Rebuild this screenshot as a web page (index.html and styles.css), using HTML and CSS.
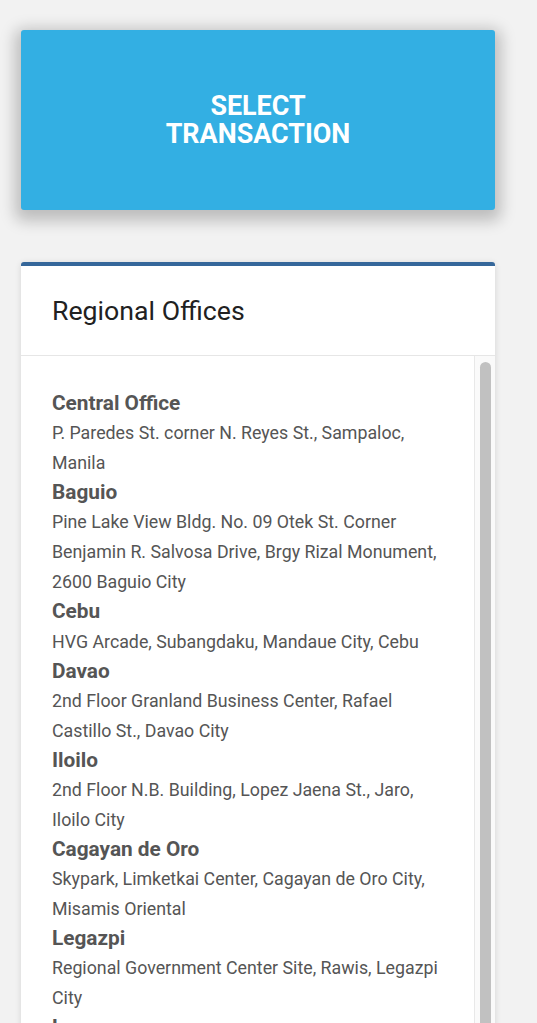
FILE: index.html
```html
<!DOCTYPE html>
<html lang="en">
<head>
<meta charset="utf-8">
<title>Regional Offices</title>
<link rel="stylesheet" href="styles.css">
</head>
<body>
<main class="page">
  <button class="select-btn" type="button"><span class="select-label">SELECT TRANSACTION</span></button>

  <section class="card">
    <header class="card-header">
      <h2 class="card-title">Regional Offices</h2>
    </header>
    <div class="card-body">
      <div class="office-list">
        <div class="office">
          <h3 class="office-name">Central Office</h3>
          <p class="office-addr">P. Paredes St. corner N. Reyes St., Sampaloc, Manila</p>
        </div>
        <div class="office">
          <h3 class="office-name">Baguio</h3>
          <p class="office-addr">Pine Lake View Bldg. No. 09 Otek St. Corner Benjamin R. Salvosa Drive, Brgy Rizal Monument, 2600 Baguio City</p>
        </div>
        <div class="office">
          <h3 class="office-name">Cebu</h3>
          <p class="office-addr">HVG Arcade, Subangdaku, Mandaue City, Cebu</p>
        </div>
        <div class="office">
          <h3 class="office-name">Davao</h3>
          <p class="office-addr">2nd Floor Granland Business Center, Rafael Castillo St., Davao City</p>
        </div>
        <div class="office">
          <h3 class="office-name">Iloilo</h3>
          <p class="office-addr">2nd Floor N.B. Building, Lopez Jaena St., Jaro, Iloilo City</p>
        </div>
        <div class="office">
          <h3 class="office-name">Cagayan de Oro</h3>
          <p class="office-addr">Skypark, Limketkai Center, Cagayan de Oro City, Misamis Oriental</p>
        </div>
        <div class="office">
          <h3 class="office-name">Legazpi</h3>
          <p class="office-addr">Regional Government Center Site, Rawis, Legazpi City</p>
        </div>
        <div class="office">
          <h3 class="office-name">Lucena</h3>
          <p class="office-addr">Quezon Avenue, Lucena City</p>
        </div>
      </div>
      <div class="scroll-track" aria-hidden="true"><div class="scroll-thumb"></div></div>
    </div>
  </section>
</main>
</body>
</html>
```

FILE: styles.css
```css
html, body {
  margin: 0;
  padding: 0;
  background: #f2f2f2;
  font-family: Roboto, "Liberation Sans", Arial, sans-serif;
}

.page {
  padding: 30px 42px 0 21px;
  display: flex;
  flex-direction: column;
  gap: 52px;
}

.select-btn {
  display: flex;
  align-items: center;
  justify-content: center;
  height: 180px;
  width: 100%;
  border: none;
  border-radius: 3px;
  background: #33afe3;
  box-shadow: 0 5px 15px 6px rgba(0, 0, 0, 0.22);
  color: #ffffff;
  font-family: Roboto, "Liberation Sans", Arial, sans-serif;
  font-weight: 700;
  font-size: 26.9px;
  line-height: 28px;
  padding: 0;
  cursor: pointer;
}

.select-label {
  max-width: 230px;
  text-align: center;
}

.card {
  background: #ffffff;
  border-top: 4px solid #35679a;
  border-radius: 3px 3px 0 0;
  box-shadow: 0 1px 6px rgba(0, 0, 0, 0.12);
}

.card-header {
  height: 89px;
  display: flex;
  align-items: center;
  padding: 0 31px;
  border-bottom: 1px solid #e6e6e6;
}

.card-title {
  margin: 0;
  font-size: 26.7px;
  font-weight: 400;
  color: #212121;
}

.card-body {
  display: flex;
}

.office-list {
  flex: 1;
  padding: 33px 31px 20px 31px;
}

.scroll-track {
  width: 21px;
  flex: none;
  background: #fafafa;
  border-left: 1px solid #e8e8e8;
  padding: 6px 4px 4px 5px;
  box-sizing: border-box;
  display: flex;
}

.scroll-thumb {
  flex: 1;
  background: #c1c1c1;
  border-radius: 6px;
}

.office {
  width: 388px;
}

.office-name {
  margin: 0;
  font-size: 20.8px;
  line-height: 29.2px;
  font-weight: 700;
  color: #555555;
}

.office-addr {
  margin: 0;
  font-size: 17.8px;
  line-height: 30px;
  color: #555555;
}
```
